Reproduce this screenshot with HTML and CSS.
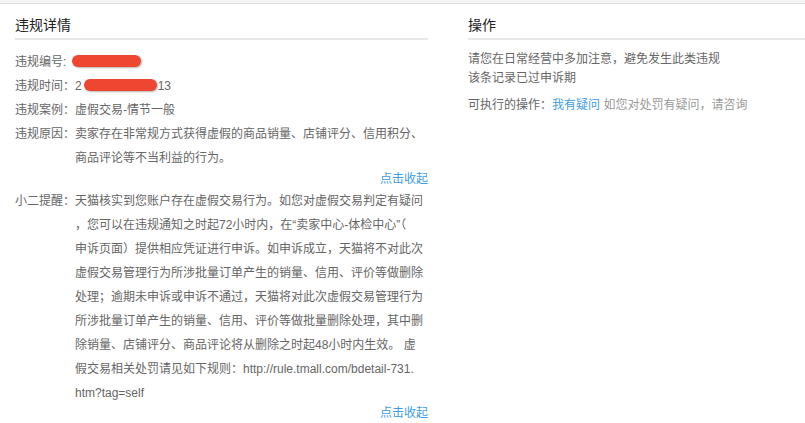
FILE: index.html
```html
<!DOCTYPE html>
<html>
<head>
    <meta charset="utf-8">
    <title>违规详情</title>
    <link rel="stylesheet" href="styles.css">
</head>
<body>
    <div class="topbar"></div>

    <div class="container">
        <div class="detail">
            <h3 class="title">违规详情</h3>

            <div class="rows">
                <div class="row">
                    <span class="label">违规编号:</span>
                    <span class="value"><span class="redact redact-id"></span></span>
                </div>
                <div class="row">
                    <span class="label">违规时间：</span>
                    <span class="value">2<span class="redact redact-time"></span>13</span>
                </div>
                <div class="row">
                    <span class="label">违规案例：</span>
                    <span class="value">虚假交易-情节一般</span>
                </div>
                <div class="row">
                    <span class="label">违规原因：</span>
                    <span class="value">卖家存在非常规方式获得虚假的商品销量、店铺评分、信用积分、<br>商品评论等不当利益的行为。</span>
                </div>
                <div class="toggle"><a href="#">点击收起</a></div>

                <div class="row">
                    <span class="label">小二提醒：</span>
                    <span class="value">天猫核实到您账户存在虚假交易行为。如您对虚假交易判定有疑问<br>，您可以在违规通知之时起72小时内，在“卖家中心-体检中心”（<br>申诉页面）提供相应凭证进行申诉。如申诉成立，天猫将不对此次<br>虚假交易管理行为所涉批量订单产生的销量、信用、评价等做删除<br>处理；逾期未申诉或申诉不通过，天猫将对此次虚假交易管理行为<br>所涉批量订单产生的销量、信用、评价等做批量删除处理，其中删<br>除销量、店铺评分、商品评论将从删除之时起48小时内生效。 虚<br>假交易相关处罚请见如下规则：http://rule.tmall.com/bdetail-731.<br>htm?tag=self</span>
                </div>
                <div class="toggle toggle-last"><a href="#">点击收起</a></div>
            </div>
        </div>

        <div class="action">
            <h3 class="title">操作</h3>
            <p class="notice">请您在日常经营中多加注意，避免发生此类违规<br>该条记录已过申诉期</p>
            <p class="ops">可执行的操作：<a href="#">我有疑问</a> <span class="hint">如您对处罚有疑问，请咨询</span></p>
        </div>
    </div>
</body>
</html>
```

FILE: styles.css
```css
body {
    font-family: "Liberation Sans", "Noto Sans CJK SC", sans-serif;
    font-size: 12px;
    color: #666;
    background-color: #fff;
    margin: 0;
    padding: 0;
}

a {
    color: #3d9ce8;
    text-decoration: none;
}

.topbar {
    height: 3px;
    background-color: #f4f4f4;
    border-bottom: 1px solid #dcdcdc;
}

.container {
    display: flex;
    gap: 40px;
}

.detail {
    width: 413px;
    padding-left: 15px;
}

.action {
    flex: 1;
}

.title {
    font-size: 14px;
    font-weight: normal;
    color: #222;
    line-height: 20px;
    margin: 0;
    padding: 11px 0 3px;
    border-bottom: 2px solid #e8e8e8;
}

.rows {
    margin-top: 10px;
}

.row {
    display: flex;
    line-height: 24px;
}

.label {
    width: 60px;
    flex-shrink: 0;
}

.value {
    flex: 1;
}

.redact {
    display: inline-block;
    height: 12px;
    border-radius: 6px;
    background-color: #ef4631;
    box-shadow: 1px 1px 2px rgba(0, 0, 0, 0.3);
    vertical-align: -1px;
}

.redact-id {
    width: 69px;
    margin-left: -3px;
}

.redact-time {
    width: 73px;
    margin: 0 1px 0 2px;
}

.toggle {
    text-align: right;
    line-height: 19px;
}

.toggle-last {
    line-height: 16px;
}

.notice {
    margin: 10px 0 0;
    line-height: 19px;
}

.ops {
    margin: 8px 0 0;
    line-height: 19px;
}

.hint {
    color: #999;
}
```
